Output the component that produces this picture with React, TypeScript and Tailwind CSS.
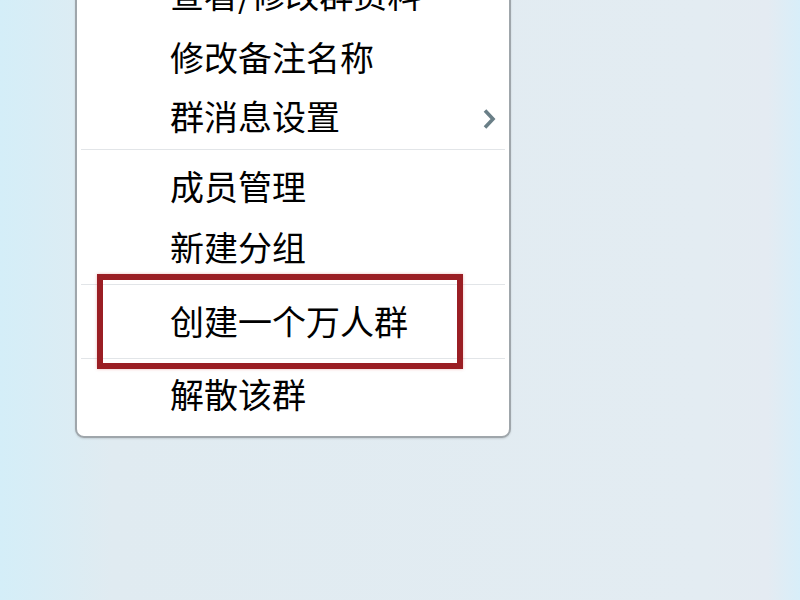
import { Fragment } from "react";

type Item = { label: string; h: number; pt: number; submenu?: boolean };

const groups: Item[][] = [
  [
    { label: "查看/修改群资料", h: 60, pt: 9 },
    { label: "修改备注名称", h: 62, pt: 12 },
    { label: "群消息设置", h: 58, pt: 9, submenu: true },
  ],
  [
    { label: "成员管理", h: 74, pt: 18 },
    { label: "新建分组", h: 58, pt: 5 },
  ],
  [{ label: "创建一个万人群", h: 71, pt: 18 }],
  [{ label: "解散该群", h: 76, pt: 17 }],
];

function MenuRow({ item }: { item: Item }) {
  return (
    <div
      className="relative flex items-start pl-[93px] pr-4"
      style={{ height: item.h, paddingTop: item.pt }}
    >
      <span className="text-[34px] leading-[34px] text-black">{item.label}</span>
      {item.submenu && (
        <svg
          className="absolute right-[12px] top-[18px] h-[22px] w-[16px]"
          viewBox="0 0 16 22"
          fill="none"
        >
          <polyline
            points="4,2.5 12,11 4,19.5"
            stroke="#6a7f87"
            strokeWidth="3.6"
            strokeLinejoin="miter"
          />
        </svg>
      )}
    </div>
  );
}

export default function App() {
  return (
    <div
      className="relative h-[600px] w-[800px] overflow-hidden bg-[linear-gradient(90deg,#d4eef8_0%,#e0ebf1_14%,#e3ecf2_88%,#e4ebf2_96%,#d8eef9_100%)]"
      style={{ fontFamily: '"Noto Sans CJK SC", "Noto Sans", sans-serif' }}
    >
      <div className="-mt-[34px] ml-[75px] w-[436px] rounded-b-[9px] border-2 border-[#9fa6ab] bg-white shadow-[0_1px_2px_rgba(0,0,0,0.12)]">
        {groups.map((group, gi) => (
          <Fragment key={gi}>
            {gi > 0 && <div className="mx-[4px] my-[1px] h-[1px] bg-[#e2e5e8]" />}
            {group.map((item) => (
              <MenuRow key={item.label} item={item} />
            ))}
          </Fragment>
        ))}
      </div>

      {/* red highlight annotation */}
      <div className="absolute left-[97px] top-[274px] h-[95px] w-[366px] border-[6px] border-[#9a1e24] shadow-[0_0_3px_rgba(200,60,60,0.35)]" />
    </div>
  );
}
